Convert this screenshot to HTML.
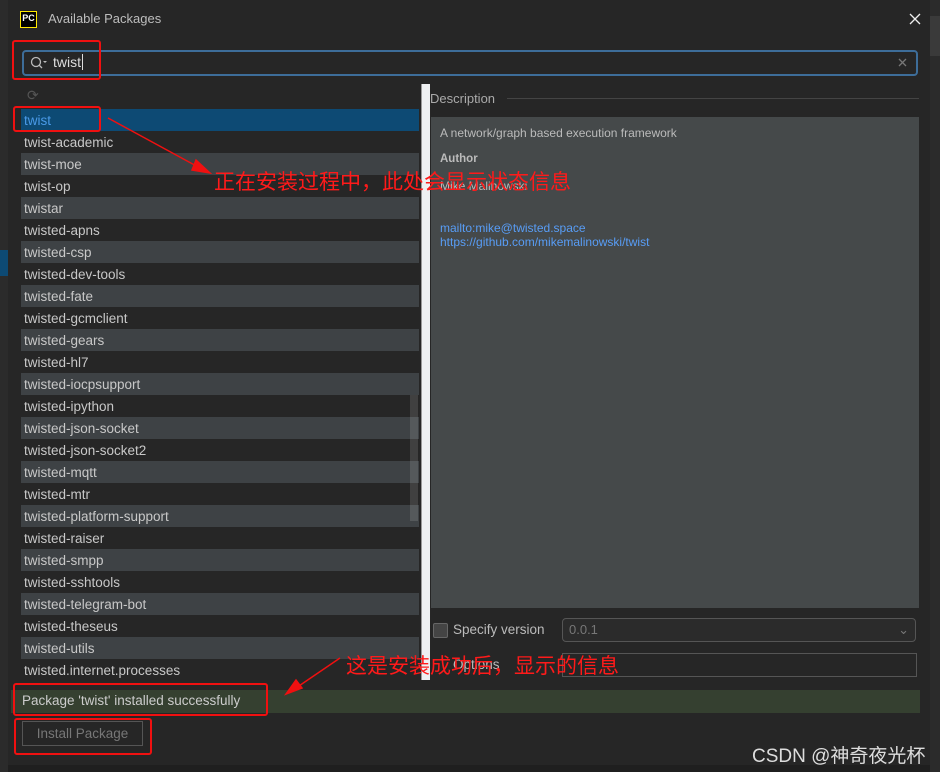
<!DOCTYPE html><html><head><style>
body{margin:0;width:940px;height:772px;background:#1f1f1f;position:relative;overflow:hidden;font-family:"Liberation Sans","Noto Sans CJK SC",sans-serif;}
.a{position:absolute}
.dlg{left:8px;top:0;width:922px;height:765px;background:#262626;}
.row{position:absolute;left:21px;width:398px;height:22px;line-height:23px;font-size:13.5px;color:#c8c8c8;padding-left:3px;box-sizing:border-box}
.l{background:#3e4245}
.red{border:2px solid #f01010;border-radius:3px;position:absolute;box-sizing:border-box}
.ann{position:absolute;color:#ff1a1a;font-size:21px;font-family:"Noto Sans CJK SC",sans-serif;white-space:nowrap}
</style></head><body>
<div class="a" style="left:0;top:0;width:8px;height:772px;background:#2b2b2b"></div>
<div class="a" style="left:0;top:250px;width:8px;height:26px;background:#0d4a74"></div>
<div class="a" style="left:930px;top:0;width:10px;height:772px;background:#2b2b2b"></div>
<div class="a" style="left:930px;top:16px;width:10px;height:40px;background:#3a3a3a"></div>
<div class="a dlg"></div>
<div class="a" style="left:20px;top:11px;width:15px;height:15px;border:1px solid #ffe800;background:#000;color:#fff;font-size:9px;font-weight:bold;line-height:12px;text-align:center">PC</div>
<div class="a" style="left:48px;top:11px;color:#bdbdbd;font-size:13px">Available Packages</div>
<svg class="a" style="left:909px;top:13px" width="12" height="12"><path d="M1 1L11 11M11 1L1 11" stroke="#eee" stroke-width="1.3"/></svg>
<div class="a" style="left:22px;top:50px;width:896px;height:26px;border:2px solid #3d6d99;border-radius:4px;box-sizing:border-box;background:#262626"></div>
<svg class="a" style="left:30px;top:56px" width="18" height="14"><circle cx="6" cy="6" r="4.5" stroke="#bbb" fill="none" stroke-width="1.3"/><path d="M9 9L12 12" stroke="#bbb" stroke-width="1.3"/><path d="M13 5L17 5L15 7Z" fill="#bbb"/></svg>
<div class="a" style="left:53px;top:54px;color:#ddd;font-size:14px">twist<span style="border-left:1px solid #ddd;margin-left:1px"></span></div>
<svg class="a" style="left:898px;top:58px" width="9" height="9"><path d="M1 1L8 8M8 1L1 8" stroke="#777" stroke-width="1.3"/></svg>
<div class="a" style="left:27px;top:87px;color:#555;font-size:14px">⟳</div>
<div class="row" style="top:109px;background:#0d4a74;color:#4a9ae8">twist</div>
<div class="row" style="top:131px">twist-academic</div>
<div class="row l" style="top:153px">twist-moe</div>
<div class="row" style="top:175px">twist-op</div>
<div class="row l" style="top:197px">twistar</div>
<div class="row" style="top:219px">twisted-apns</div>
<div class="row l" style="top:241px">twisted-csp</div>
<div class="row" style="top:263px">twisted-dev-tools</div>
<div class="row l" style="top:285px">twisted-fate</div>
<div class="row" style="top:307px">twisted-gcmclient</div>
<div class="row l" style="top:329px">twisted-gears</div>
<div class="row" style="top:351px">twisted-hl7</div>
<div class="row l" style="top:373px">twisted-iocpsupport</div>
<div class="row" style="top:395px">twisted-ipython</div>
<div class="row l" style="top:417px">twisted-json-socket</div>
<div class="row" style="top:439px">twisted-json-socket2</div>
<div class="row l" style="top:461px">twisted-mqtt</div>
<div class="row" style="top:483px">twisted-mtr</div>
<div class="row l" style="top:505px">twisted-platform-support</div>
<div class="row" style="top:527px">twisted-raiser</div>
<div class="row l" style="top:549px">twisted-smpp</div>
<div class="row" style="top:571px">twisted-sshtools</div>
<div class="row l" style="top:593px">twisted-telegram-bot</div>
<div class="row" style="top:615px">twisted-theseus</div>
<div class="row l" style="top:637px">twisted-utils</div>
<div class="row" style="top:659px">twisted.internet.processes</div>
<div class="a" style="left:410px;top:395px;width:8px;height:126px;background:rgba(255,255,255,0.12)"></div>
<div class="a" style="left:421px;top:84px;width:8px;height:596px;background:#eef0f2;border-left:1px solid #999"></div>
<div class="a" style="left:430px;top:91px;color:#aaa;font-size:13px">Description</div>
<div class="a" style="left:507px;top:98px;width:412px;height:1px;background:#444"></div>
<div class="a" style="left:431px;top:117px;width:488px;height:491px;background:#45494a"></div>
<div class="a" style="left:440px;top:126px;color:#bbb;font-size:12px">A network/graph based execution framework</div>
<div class="a" style="left:440px;top:153px;color:#bbb;font-size:11.5px;font-weight:bold">Author</div>
<div class="a" style="left:440px;top:179px;color:#bbb;font-size:12px">Mike Malinowski</div>
<div class="a" style="left:440px;top:221px;color:#589df6;font-size:12px;line-height:14px">mailto:mike@twisted.space<br>https://github.com/mikemalinowski/twist</div>
<div class="a" style="left:433px;top:623px;width:13px;height:13px;border:1px solid #666;background:#444;border-radius:2px"></div>
<div class="a" style="left:453px;top:622px;color:#bbb;font-size:13.5px">Specify version</div>
<div class="a" style="left:562px;top:618px;width:354px;height:24px;border:1px solid #555;border-radius:4px;box-sizing:border-box;background:#2b2b2b;color:#777;font-size:13px;line-height:22px;padding-left:6px">0.0.1<span style="float:right;margin-right:6px">⌄</span></div>
<div class="a" style="left:453px;top:657px;color:#bbb;font-size:13.5px">Options</div>
<div class="a" style="left:562px;top:653px;width:355px;height:24px;border:1px solid #555;box-sizing:border-box"></div>
<div class="a" style="left:11px;top:690px;width:909px;height:23px;background:#354030"></div>
<div class="a" style="left:22px;top:693px;color:#ccc;font-size:13.5px">Package 'twist' installed successfully</div>
<div class="a" style="left:22px;top:721px;width:121px;height:25px;border:1px solid #555;box-sizing:border-box;color:#777;font-size:13.5px;text-align:center;line-height:23px">Install Package</div>
<div class="a" style="left:752px;top:741px;color:#ddd;font-size:19px">CSDN @神奇夜光杯</div>
<div class="red" style="left:12px;top:40px;width:89px;height:40px"></div>
<div class="red" style="left:13px;top:106px;width:88px;height:26px"></div>
<div class="red" style="left:13px;top:683px;width:255px;height:33px"></div>
<div class="red" style="left:14px;top:718px;width:138px;height:37px"></div>
<div class="ann" style="left:214px;top:166px">正在安装过程中，此处会显示状态信息</div>
<div class="ann" style="left:346px;top:650px">这是安装成功后，显示的信息</div>
<svg class="a" style="left:0;top:0" width="940" height="772"><g stroke="#f01010" stroke-width="1.5" fill="#f01010">
<line x1="108" y1="118" x2="200" y2="168"/><polygon points="210,173 196,160 192,170"/>
<line x1="340" y1="658" x2="293" y2="690"/><polygon points="286,694 296,680 302,688"/></g></svg>
</body></html>
